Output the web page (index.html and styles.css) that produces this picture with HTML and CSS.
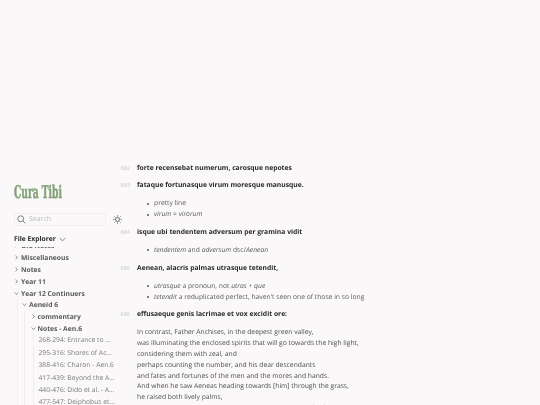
FILE: index.html
```html
<!DOCTYPE html>
<html lang="en">
<head>
<meta charset="utf-8">
<title>Cura Tibi</title>
<link rel="stylesheet" href="styles.css">
</head>
<body>
<div class="page">
  <aside class="sidebar">
    <h1 class="brand">Cura Tibi</h1>
    <div class="tools">
      <div class="search">
        <svg class="search-icon" viewBox="0 0 12 12"><circle cx="5" cy="5" r="3.9"/><path d="M7.9 7.9 11.2 11.2"/></svg>
        <span>Search</span>
      </div>
      <svg class="sun" viewBox="0 0 12 12"><circle cx="6" cy="6" r="2.6"/><path d="M6 .4v1.6M6 10v1.6M.4 6H2M10 6h1.6M2 2l1.1 1.1M8.9 8.9 10 10M2 10l1.1-1.1M8.9 3.1 10 2"/></svg>
    </div>
    <div class="explorer-head">
      <span>File Explorer</span>
      <svg class="chev big" viewBox="0 0 10 10"><path d="M1 3 5 7l4-4"/></svg>
    </div>
    <nav class="tree">
      <div class="row clipped"><svg class="chev" viewBox="0 0 10 10"><path d="M3 1.5 7 5l-4 3.5"/></svg><span>Old Notes</span></div>
      <div class="row"><svg class="chev" viewBox="0 0 10 10"><path d="M3 1.5 7 5l-4 3.5"/></svg><span>Miscellaneous</span></div>
      <div class="row"><svg class="chev" viewBox="0 0 10 10"><path d="M3 1.5 7 5l-4 3.5"/></svg><span>Notes</span></div>
      <div class="row"><svg class="chev" viewBox="0 0 10 10"><path d="M3 1.5 7 5l-4 3.5"/></svg><span>Year 11</span></div>
      <div class="row"><svg class="chev" viewBox="0 0 10 10"><path d="M1.5 3 5 7l3.5-4"/></svg><span>Year 12 Continuers</span></div>
      <div class="nest">
        <div class="row"><svg class="chev" viewBox="0 0 10 10"><path d="M1.5 3 5 7l3.5-4"/></svg><span>Aeneid 6</span></div>
        <div class="nest inner">
          <div class="row"><svg class="chev" viewBox="0 0 10 10"><path d="M3 1.5 7 5l-4 3.5"/></svg><span>commentary</span></div>
          <div class="row"><svg class="chev" viewBox="0 0 10 10"><path d="M1.5 3 5 7l3.5-4"/></svg><span>Notes - Aen.6</span></div>
          <div class="leaves">
            <div class="leaf">268-294: Entrance to ...</div>
            <div class="leaf">295-316: Shores of Ac...</div>
            <div class="leaf">388-416: Charon - Aen.6</div>
            <div class="leaf">417-439: Beyond the A...</div>
            <div class="leaf">440-476: Dido et al. - A...</div>
            <div class="leaf">477-547: Deiphobus et...</div>
          </div>
        </div>
      </div>
    </nav>
  </aside>
  <main class="content">
    <div class="verse"><span class="num">682</span><strong>forte recensebat numerum, carosque nepotes</strong></div>
    <div class="verse"><span class="num">683</span><strong>fataque fortunasque virum moresque manusque.</strong></div>
    <ul>
      <li>pretty line</li>
      <li><em>virum</em> = <em>virorum</em></li>
    </ul>
    <div class="verse"><span class="num">684</span><strong>isque ubi tendentem adversum per gramina vidit</strong></div>
    <ul>
      <li><em>tendentem</em> and <em>adversum</em> dsc/<em>Aenean</em></li>
    </ul>
    <div class="verse"><span class="num">685</span><strong>Aenean, alacris palmas utrasque tetendit,</strong></div>
    <ul>
      <li><em>utrasque</em> a pronoun, not <em>utras</em> + <em>que</em></li>
      <li><em>tetendit</em> a reduplicated perfect, haven't seen one of those in so long</li>
    </ul>
    <div class="verse"><span class="num">686</span><strong>effusaeque genis lacrimae et vox excidit ore:</strong></div>
    <p>In contrast, Father Anchises, in the deepest green valley,<br>
    was illuminating the enclosed spirits that will go towards the high light,<br>
    considering them with zeal, and<br>
    perhaps counting the number, and his dear descendants<br>
    and fates and fortunes of the men and the mores and hands.<br>
    And when he saw Aeneas heading towards [him] through the grass,<br>
    he raised both lively palms,<br>
    and tears were poured out on his cheeks, and his voice fell from his mouth:</p>
  </main>
</div>
</body>
</html>
```
FILE: styles.css
```css
html, body {
  margin: 0;
  height: 100%;
  overflow: hidden;
  background: #faf8f8;
}
.page {
  display: grid;
  grid-template-columns: 137px 1fr;
  height: 405px;
  overflow: hidden;
  font-family: "Open Sans", sans-serif;
  font-size: 6.75px;
  color: #4e4e4e;
  text-rendering: geometricPrecision;
  will-change: transform;
}
.sidebar {
  padding: 184px 10px 0 14px;
  min-width: 0;
  height: 221px;
  display: flex;
  flex-direction: column;
}
.brand {
  margin: 0;
  font-family: "DejaVu Serif Condensed", "DejaVu Serif", serif;
  font-size: 17.5px;
  line-height: 19px;
  font-weight: 700;
  color: #84a17a;
  -webkit-text-stroke: .5px #84a17a;
  white-space: nowrap;
  transform: scaleX(.58);
  transform-origin: left center;
}
.tools {
  display: flex;
  align-items: center;
  gap: 7px;
  margin-top: 10px;
}
.search {
  width: 92px;
  height: 13px;
  box-sizing: border-box;
  border: 1px solid #efeded;
  border-radius: 3px;
  display: flex;
  align-items: center;
  gap: 3px;
  padding-left: 2px;
  color: #c0c0c0;
  font-size: 7px;
}
.search-icon { width: 9px; height: 9px; fill: none; stroke: #4e4e4e; stroke-width: .9; }
.sun { width: 9px; height: 9px; fill: none; stroke: #2b2b2b; stroke-width: .9; }
.explorer-head {
  display: flex;
  align-items: center;
  gap: 3px;
  margin-top: 7px;
  font-weight: 700;
  color: #2b2b2b;
  line-height: 12px;
}
.chev { width: 5px; height: 5px; fill: none; stroke: #4e4e4e; stroke-width: 1.2; flex: none; }
.chev.big { width: 7px; height: 7px; stroke-width: 1; }
.tree {
  margin-top: 2px;
  overflow: hidden;
  min-width: 0;
  flex: 1;
}
.row {
  display: flex;
  align-items: center;
  gap: 2px;
  height: 11.8px;
  font-weight: 700;
  color: #5a5a5a;
}
.clipped { margin-top: -7px; }
.nest {
  margin-left: 2.5px;
  padding-left: 4.5px;
  border-left: 1px solid #efeded;
}
.inner { margin-left: 1.5px; padding-left: 6px; }
.leaves {
  margin-left: 2.5px;
  padding-left: 4.5px;
  border-left: 1px solid #efeded;
}
.leaf {
  height: 12.4px;
  line-height: 12.4px;
  white-space: nowrap;
  color: #7b7b7b;
}
.content {
  padding: 162.6px 0 0 0;
  min-width: 0;
  line-height: 10.8px;
}
.verse {
  position: relative;
  margin-bottom: 7.1px;
}
.num {
  position: absolute;
  right: 100%;
  margin-right: 7px;
  font-size: 5.5px;
  color: #c8c8c8;
}
.verse strong { color: #2b2b2b; font-weight: 700; }
ul {
  margin: 0 0 7.1px;
  padding: 0 0 0 17px;
  color: #5c5c5c;
  list-style: none;
}
li { line-height: 10.8px; position: relative; }
li::before {
  content: "";
  position: absolute;
  left: -7px;
  top: 4.4px;
  width: 2px;
  height: 2px;
  border-radius: 50%;
  background: #5c5c5c;
}
p { margin: 0; line-height: 10.8px; white-space: nowrap; color: #4e4e4e; }
```
